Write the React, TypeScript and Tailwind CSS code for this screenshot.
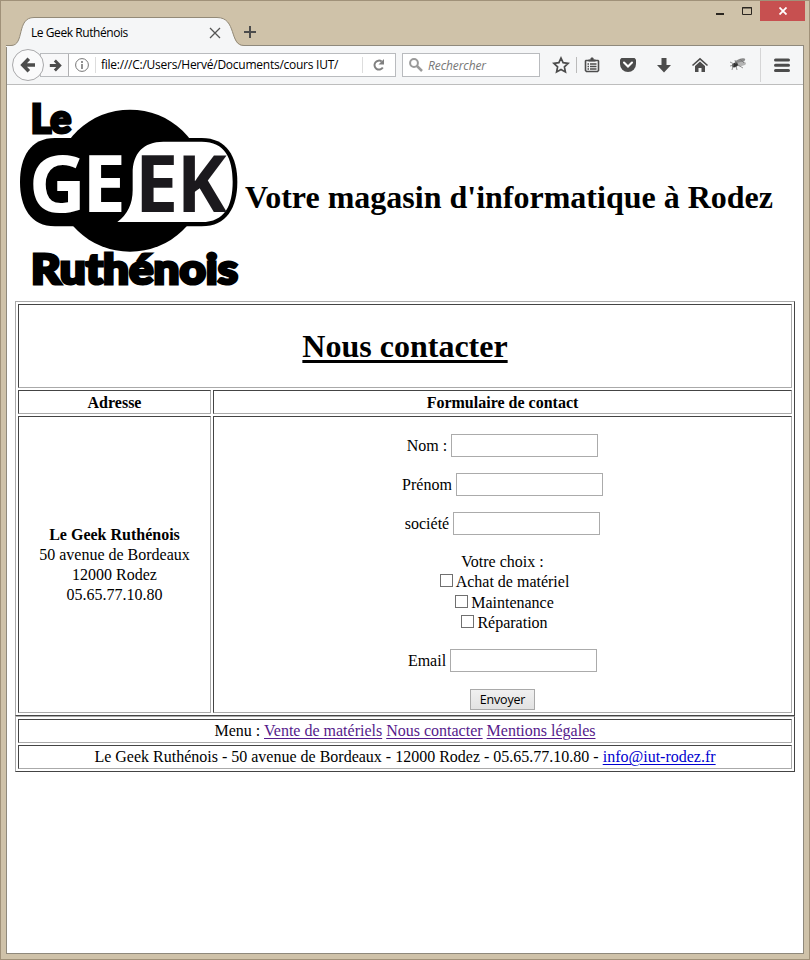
import type { ReactNode } from "react";

const cell =
  "border border-t-[#444] border-l-[#444] border-r-[#aaa] border-b-[#aaa] text-center";
const table =
  "grid gap-[2px] border p-[2px] border-t-[#aaa] border-l-[#aaa] border-r-[#444] border-b-[#444]";

function Icon({ className = "", children }: { className?: string; children: ReactNode }) {
  return (
    <svg viewBox="0 0 20 20" className={"h-5 w-5 shrink-0 fill-[#4c4c4c] " + className}>
      {children}
    </svg>
  );
}

function Arrow({ className }: { className: string }) {
  return (
    <svg viewBox="0 0 16 16" className={className} fill="none" stroke="#4c4c4c" strokeWidth="3.600">
      <path d="M2.500 8H15M8.800 1.800L2.800 8l6 6.200" />
    </svg>
  );
}

function TitleBar() {
  return (
    <div className="flex h-[45px] shrink-0">
      <div className="relative mt-4 h-[30px] w-[238px] shrink-0">
        <svg className="absolute inset-0" width="238" height="30" viewBox="0 0 238 30">
          <path
            d="M0 30V28.500H5C19 28.500 10 0.500 28 0.500H211C231 0.500 223 28.500 237 28.500H238V30Z"
            fill="#f5f6f7"
          />
          <path
            d="M0 28.500H5C19 28.500 10 0.500 28 0.500H211C231 0.500 223 28.500 238 28.500"
            fill="none"
            stroke="#938a78"
          />
        </svg>
        <div className="relative flex h-[31px] items-center pl-[25px] text-[12px]">
          <span className="w-[178px] tracking-[-0.43px]">Le Geek Ruthénois</span>
          <svg width="12" height="12" viewBox="0 0 12 12" stroke="#555" strokeWidth="1.300">
            <path d="M1 1l10 10M11 1L1 11" />
          </svg>
        </div>
      </div>
      <svg className="mt-6" width="12" height="14" viewBox="0 0 12 14" stroke="#4c4c4c" strokeWidth="2">
        <path d="M0 7H12M6 1V13" />
      </svg>
      <div className="-mr-px ml-auto flex h-5">
        <svg width="51" height="20" viewBox="0 0 51 20" fill="none" stroke="#2b2620">
          <path d="M7 13H15" strokeWidth="2" />
          <path d="M33.500 6.500H42.500V13.500H33.500ZM33 7H43" />
        </svg>
        <div className="flex w-[45px] items-center justify-center bg-[#c75050]">
          <svg width="8" height="8" viewBox="0 0 8 8" stroke="white" strokeWidth="1.800">
            <path d="M.5.5l7 7M7.500.5l-7 7" />
          </svg>
        </div>
      </div>
    </div>
  );
}

function Toolbar() {
  return (
    <div className="flex h-[39px] shrink-0 items-center border-b border-[#bdbdbd] bg-[#f5f6f7] text-[12px]">
      <div className="z-10 ml-[5px] flex h-8 w-8 shrink-0 items-center justify-center rounded-full border border-[#a9a9ab] bg-[#fafafb]">
        <Arrow className="h-4 w-4" />
      </div>
      <div className="-ml-1 flex h-6 w-[356px] shrink-0 items-center border border-[#b9bbbe] bg-white">
        <div className="flex h-full w-[28px] shrink-0 items-center justify-end border-r border-[#b0b0b2] bg-[#f8f8f9] pr-[6px]">
          <Arrow className="h-[13px] w-[13px] rotate-180" />
        </div>
        <svg className="ml-[6px] shrink-0" width="14" height="14" viewBox="0 0 14 14" fill="none" stroke="#777">
          <circle cx="7" cy="7" r="6.400" />
          <path d="M7 6V11M7 3V5" strokeWidth="1.600" />
        </svg>
        <div className="ml-[6px] h-4 w-px bg-[#ddd]" />
        <div className="ml-[5px] w-[238px] overflow-hidden whitespace-nowrap tracking-[-0.25px]">
          file:///C:/Users/Hervé/Documents/cours IUT/
        </div>
        <div className="ml-[23px] h-4 w-px bg-[#ddd]" />
        <svg className="ml-[9px]" width="14" height="14" viewBox="0 0 14 14" fill="none" stroke="#808080" strokeWidth="2">
          <path d="M10.800 9.500A4.500 4.500 0 1 1 9.700 3.500" />
          <path d="M12 1V6.500H6.500Z" fill="#808080" stroke="none" />
        </svg>
      </div>
      <div className="ml-[6px] flex h-6 w-[138px] shrink-0 items-center border border-[#b9bbbe] bg-white text-[#777] italic">
        <svg className="ml-[6px]" width="14" height="14" viewBox="0 0 14 14" fill="none" stroke="#9a9a9a">
          <circle cx="5" cy="5" r="3.900" strokeWidth="2" />
          <path d="M8 8l5 5" strokeWidth="2.500" />
        </svg>
        <span className="ml-[5px] pt-px tracking-[-0.1px]">Rechercher</span>
      </div>
      <Icon className="ml-[11px]">
        <path
          d="M10 3l2.100 4.700 5 .6-3.700 3.500 1 5.100L10 14.400l-4.400 2.500 1-5.100L2.900 8.300l5-.6Z"
          fill="none"
          stroke="#4c4c4c"
          strokeWidth="1.700"
        />
      </Icon>
      <div className="ml-[5px] h-4 w-px bg-[#bbb]" />
      <Icon className="ml-[5px]">
        <path
          d="M4 5.500H16L16.500 6V15.500L15.500 16.500H4.500L3.500 15.500V6Z"
          fill="#f5f6f7"
          stroke="#4c4c4c"
          strokeWidth="1.600"
        />
        <path d="M6.500 6.500V4.500H8.500V3.200L9.300 2.500h1.500l.8.700V4.500H13.500V6.500Z" />
        <path d="M5.500 9h1.500M8 9h6.500M5.500 11.500h1.500M8 11.500h6.500M5.500 14h1.500M8 14h6.500" stroke="#4c4c4c" strokeWidth="1.300" />
      </Icon>
      <Icon className="ml-4">
        <path d="M3.500 3h13L18 4.500V9a8 8 0 0 1-16 0V4.500Z" />
        <path d="M6 7.500l4 4 4-4" fill="none" stroke="white" strokeWidth="2.100" strokeLinecap="round" />
      </Icon>
      <Icon className="ml-4">
        <path d="M7.500 3h5v7H17l-7 7.500L3 10h4.500Z" />
      </Icon>
      <Icon className="ml-4">
        <path d="M10 6.500l5 4.500V17h-3.500v-4h-3v4H5v-6Z" />
        <path d="M2.500 10.500L10 3.800l7.500 6.700" fill="none" stroke="#4c4c4c" strokeWidth="1.600" />
      </Icon>
      <Icon className="ml-[18px]">
        <ellipse cx="12" cy="6" rx="5.500" ry="2.200" transform="rotate(-20 12 6)" fill="#8a8a8a" />
        <ellipse cx="13" cy="9" rx="5" ry="2" transform="rotate(-8 13 9)" fill="#b4b4b4" />
        <ellipse cx="7" cy="10" rx="3" ry="2.200" transform="rotate(-25 7 10)" fill="#333" />
        <path
          d="M2 7l4 2M2 11l4-1M7 5l1 4M5 11l-1 4M8 11l1 4M10 10l5 3M12 4l4 4"
          stroke="#777"
          strokeWidth=".8"
        />
      </Icon>
      <div className="ml-3 h-[34px] w-px bg-[#d5d5d6]" />
      <Icon className="ml-[11px]">
        <path d="M3.500 5H16.500M3.500 10.300H16.500M3.500 15.600H16.500" stroke="#4c4c4c" strokeWidth="3" strokeLinecap="round" />
      </Icon>
    </div>
  );
}

function Logo() {
  return (
    <svg className="h-[210px] w-[240px] shrink-0" viewBox="0 0 720 630" fontFamily="'Open Sans'" fontWeight="700">
      <ellipse cx="360" cy="272" rx="222" ry="213" />
      <path d="M135 144H575C650 144 682 200 682 276C682 352 650 409 575 409H135C62 409 30 352 30 276C30 200 62 144 135 144Z" />
      <path
        d="M322 396Q368 362 368 300V250C368 190 400 155 460 155H575C645 155 668 205 668 275C668 346 645 396 575 396Z"
        fill="white"
      />
      <g fontSize="234">
        <text x="56" y="365" fill="white" textLength="172" lengthAdjust="spacingAndGlyphs">G</text>
        <text x="217" y="365" fill="white">E</text>
        <text x="374" y="365" fill="#1b191d">E</text>
        <text x="500" y="365" fill="#1b191d" textLength="150" lengthAdjust="spacingAndGlyphs">K</text>
      </g>
      <g fontFamily="Lato" fontWeight="900" stroke="black" strokeWidth="9">
        <text x="62" y="129" fontSize="122" textLength="122" lengthAdjust="spacingAndGlyphs">Le</text>
        <text x="63" y="582" fontSize="124" textLength="621" lengthAdjust="spacingAndGlyphs">Ruthénois</text>
      </g>
    </svg>
  );
}

function Field({ label }: { label: string }) {
  return (
    <label className="mb-4 flex h-[23px] items-center justify-center gap-1">
      {label}
      <input className="h-[23px] w-[147px] border border-[#ababab] bg-white" />
    </label>
  );
}

function Choice({ label }: { label: string }) {
  return (
    <label className="flex h-[20.400px] items-center justify-center gap-[3px] pl-1">
      <input type="checkbox" className="-mt-[3px] h-[13px] w-[13px] appearance-none border border-[#707070] bg-white" />
      {label}
    </label>
  );
}

export default function App() {
  return (
    <div className="flex h-[960px] w-[810px] flex-col border border-[#a09179] bg-[#cfc2a9] px-[5px] pb-[5px] font-['Open_Sans',sans-serif] text-black">
      <TitleBar />
      <div className="-mt-px flex min-h-0 flex-1 flex-col border border-[#8f897c] bg-white">
        <Toolbar />
        <main className="px-2 pt-[5px] font-['Liberation_Serif',serif] text-[16px] leading-5">
          <header className="-ml-[5px] flex h-[211px]">
            <Logo />
            <h1 className="mt-[89px] -ml-[5px] text-[32px] leading-[36px] font-bold whitespace-nowrap">
              Votre magasin d'informatique à Rodez
            </h1>
          </header>
          <section className={table + " w-[780px] grid-cols-[193px_579px] grid-rows-[84px_24px_297px]"}>
            <div className={cell + " col-span-2 flex items-center justify-center"}>
              <h2 className="text-[32px] leading-9 font-bold underline decoration-[3px] underline-offset-[3px]">
                Nous contacter
              </h2>
            </div>
            <div className={cell + " pt-[2px] font-bold"}>Adresse</div>
            <div className={cell + " pt-[2px] font-bold"}>Formulaire de contact</div>
            <div className={cell + " flex flex-col justify-center"}>
              <b>Le Geek Ruthénois</b>
              <span>50 avenue de Bordeaux</span>
              <span>12000 Rodez</span>
              <span>05.65.77.10.80</span>
            </div>
            <form className={cell + " pt-[17px]"}>
              <Field label="Nom :" />
              <Field label="Prénom" />
              <Field label="société" />
              <div className="pt-px">Votre choix :</div>
              <Choice label="Achat de matériel" />
              <Choice label="Maintenance" />
              <Choice label="Réparation" />
              <div className="h-4" />
              <Field label="Email" />
              <button
                type="button"
                className="mx-auto mt-[17px] flex h-[21px] w-[65px] items-center justify-center border border-[#a9a9a9] bg-linear-to-b from-[#f0f0f0] to-[#e2e2e2] pt-px font-['Open_Sans',sans-serif] text-[12.500px] tracking-[-0.2px]"
              >
                Envoyer
              </button>
            </form>
          </section>
          <footer className={table + " w-[780px] grid-rows-[24px_24px]"}>
            <div className={cell + " pt-px"}>
              Menu : <a className="text-[#551a8b] underline underline-offset-2">Vente de matériels</a>{" "}
              <a className="text-[#551a8b] underline underline-offset-2">Nous contacter</a>{" "}
              <a className="text-[#551a8b] underline underline-offset-2">Mentions légales</a>
            </div>
            <div className={cell + " pt-px"}>
              Le Geek Ruthénois - 50 avenue de Bordeaux - 12000 Rodez - 05.65.77.10.80 -{" "}
              <a className="text-[#0000d0] underline underline-offset-2">info@iut-rodez.fr</a>
            </div>
          </footer>
        </main>
      </div>
    </div>
  );
}
